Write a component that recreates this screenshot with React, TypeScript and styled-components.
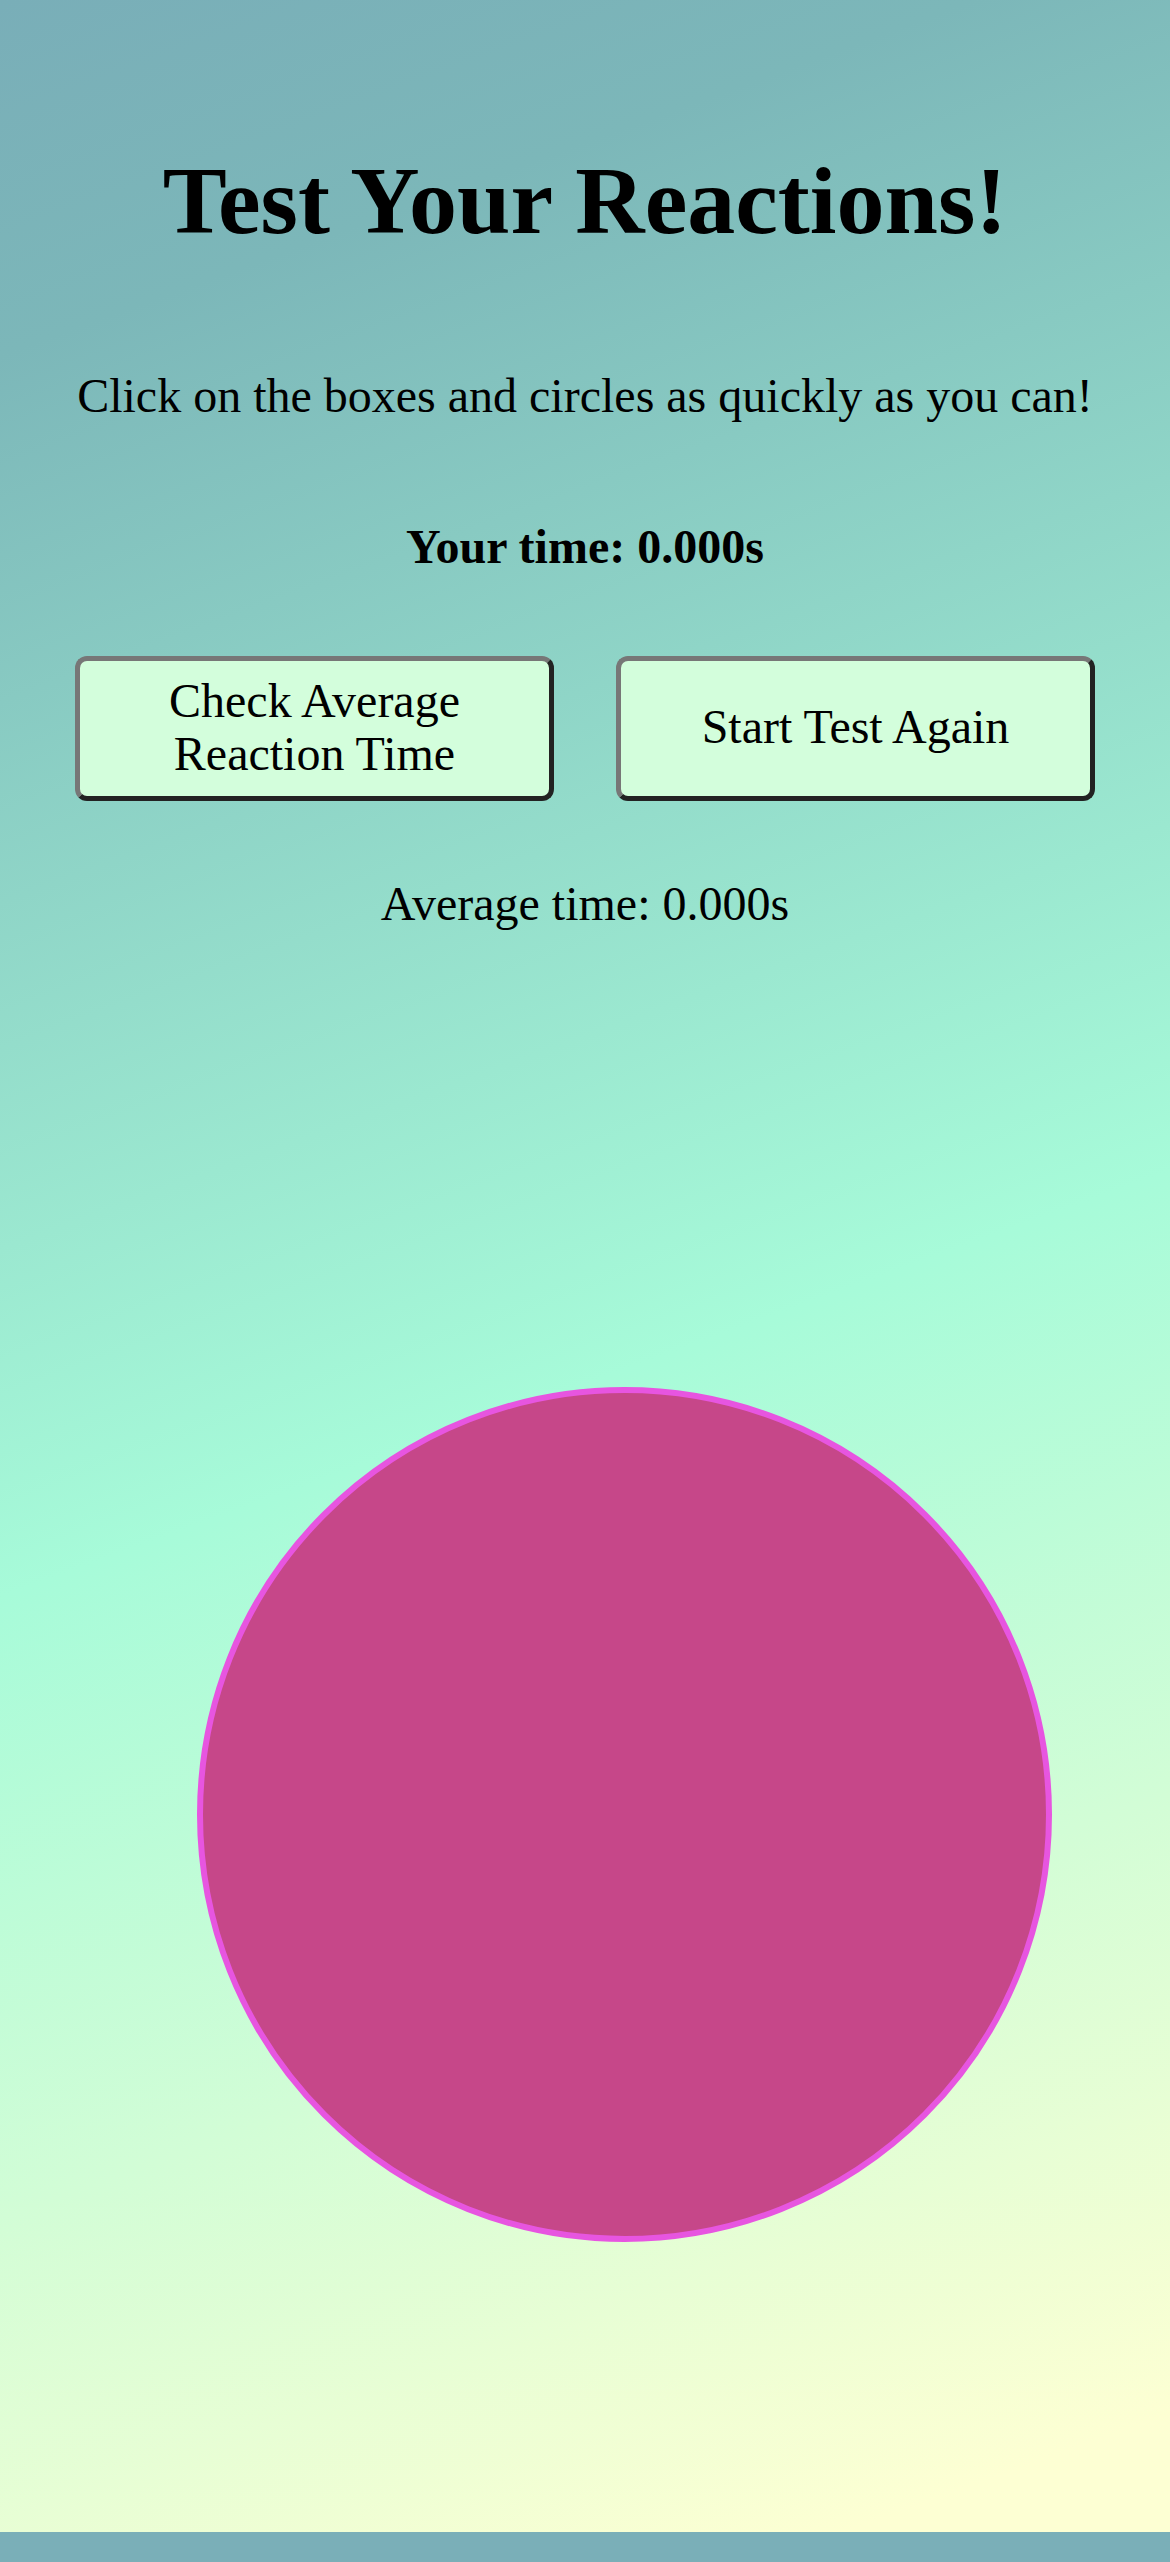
import React, { useState } from 'react';
import styled, { createGlobalStyle } from 'styled-components';

const GlobalStyle = createGlobalStyle`
  html {
    background: #7aafb8;
  }
  body {
    margin: 0;
    font-family: "Liberation Serif", "Times New Roman", serif;
    color: #000;
  }
`;

const App: React.FC = () => {
  const [time] = useState(0);
  const [average, setAverage] = useState<number | null>(0);

  return (
    <>
      <GlobalStyle />
      <Page>
        <Title>Test Your Reactions!</Title>
        <Intro>Click on the boxes and circles as quickly as you can!</Intro>
        <YourTime>Your time: {time.toFixed(3)}s</YourTime>
        <ButtonRow>
          <ActionButton onClick={() => setAverage(0)}>Check Average Reaction Time</ActionButton>
          <ActionButton>Start Test Again</ActionButton>
        </ButtonRow>
        <Average>Average time: {(average ?? 0).toFixed(3)}s</Average>
        <Target style={{ left: 197, top: 1387, width: 855, height: 855 }} />
      </Page>
    </>
  );
};

export default App;

const Page = styled.div`
  position: relative;
  height: 2532px;
  box-sizing: border-box;
  padding-top: 146px;
  display: flex;
  flex-direction: column;
  align-items: center;
  background: linear-gradient(160deg, #79aeb8 0%, #7cb7b9 12%, #a7fbd9 54%, #fdffd3 96%);
`;

const Title = styled.h1`
  margin: 0;
  font-size: 96px;
  line-height: 110px;
  font-weight: bold;
`;

const Intro = styled.p`
  margin: 112px 0 0;
  font-size: 48px;
  line-height: 55px;
`;

const YourTime = styled.p`
  margin: 96px 0 0;
  font-size: 48px;
  line-height: 55px;
  font-weight: bold;
`;

const ButtonRow = styled.div`
  margin-top: 82px;
  display: flex;
  gap: 62px;
`;

const ActionButton = styled.button`
  width: 479px;
  height: 145px;
  box-sizing: border-box;
  padding: 0 60px 4px;
  background: #d3fedc;
  border: 5px solid;
  border-color: #777 #222 #222 #777;
  border-radius: 12px;
  font-family: "Liberation Serif", "Times New Roman", serif;
  font-size: 48px;
  line-height: 53px;
  color: #000;
  cursor: pointer;
`;

const Average = styled.p`
  margin: 75px 0 0;
  font-size: 48px;
  line-height: 55px;
`;

const Target = styled.div`
  position: absolute;
  box-sizing: border-box;
  border-radius: 50%;
  background: #c64789;
  border: 6px solid #e755e0;
  cursor: pointer;
`;
